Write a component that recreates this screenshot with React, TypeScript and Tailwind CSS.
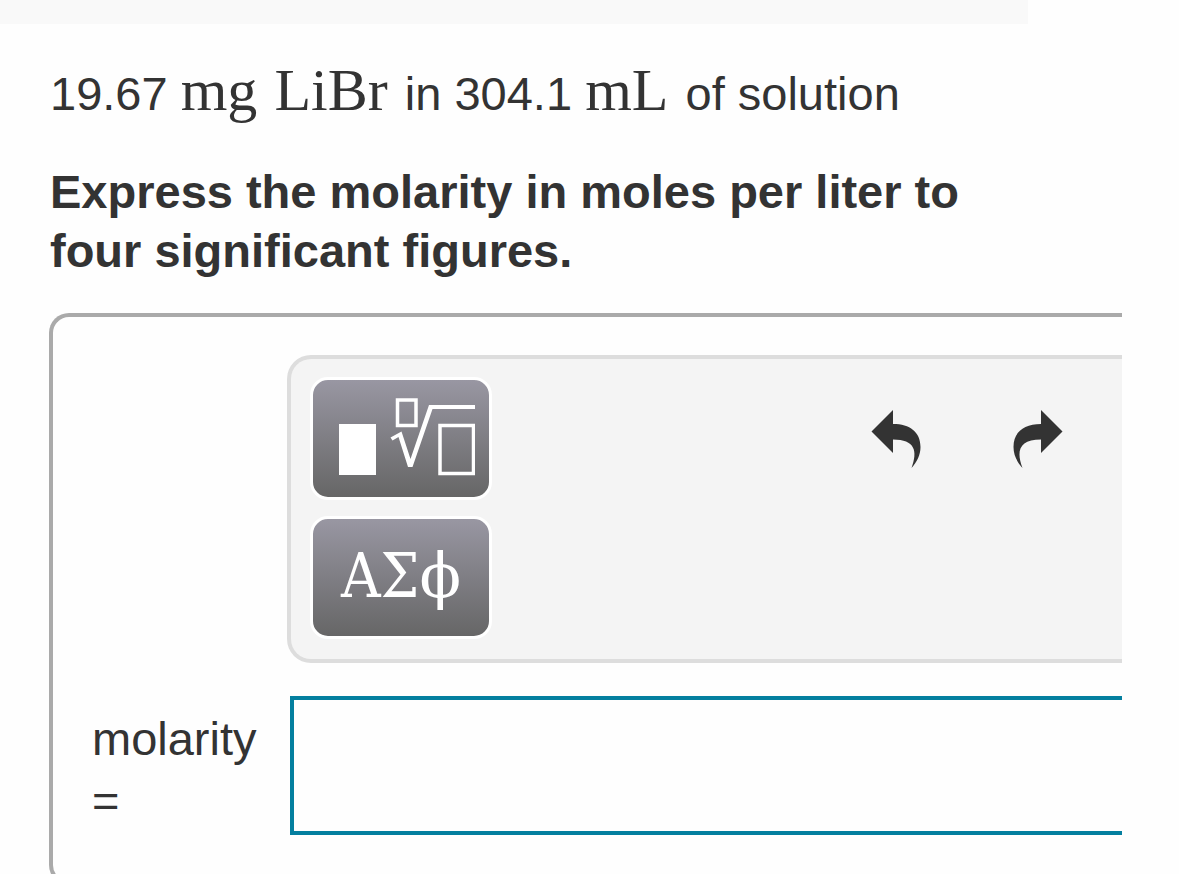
import type { ReactNode } from "react";

function Unit({ children }: { children: ReactNode }) {
  return <span className="mr-1 font-['Liberation_Serif',serif] text-[60px] leading-none">{children}</span>;
}

function ToolButton({ label, children }: { label: string; children: ReactNode }) {
  return (
    <button
      type="button"
      aria-label={label}
      className="flex h-[123px] w-[182px] items-center justify-center rounded-[18px] border-3 border-white bg-linear-to-b from-[#9a98a4] to-[#656565] bg-origin-border text-white"
    >
      {children}
    </button>
  );
}

function TemplateIcon() {
  return (
    <svg width="136" height="78" viewBox="0 0 136 78" fill="none" stroke="white" aria-hidden="true">
      <path d="M0 26H37V77H0Z" fill="white" stroke="none" />
      <path d="M58.5 2H77V27.5H58.5Z" strokeWidth="3.5" />
      <path
        d="M51.5 39.500L62.500 33.500L71.500 61L90 7H136V11H93.500L73.500 69H69L59.500 39L53.500 42.500Z"
        fill="white"
        stroke="none"
      />
      <path d="M101 27.500H134.500V75.500H101Z" strokeWidth="3.500" />
    </svg>
  );
}

function CurvedArrow({ flipped = false }: { flipped?: boolean }) {
  return (
    <svg
      width="50"
      height="58"
      viewBox="0 0 50 58"
      fill="#333333"
      className={flipped ? "-scale-x-100" : ""}
      aria-hidden="true"
    >
      <path d="M0.500 21.500L22 0V14C39 14 49.500 22 49.500 37C49.500 45 46 52 40.500 58C47 41 44 29.500 22 29.500V43Z" />
    </svg>
  );
}

export default function App() {
  return (
    <div className="h-screen overflow-hidden bg-[#fefefe] font-['Liberation_Sans',Arial,sans-serif] text-[47px] text-[#333333]">
      <div className="mr-[151px] h-6 bg-[#f9f9f9]" />
      <main className="pt-9 pl-[50px]">
        <p className="leading-[68px] whitespace-nowrap">
          19.67 <Unit>mg</Unit> <Unit>LiBr</Unit> in 304.1 <Unit>mL</Unit> of solution
        </p>
        <p className="mt-[34px] max-w-[960px] leading-[59px] font-bold">
          Express the molarity in moles per liter to four significant figures.
        </p>
        <section className="mt-[33px] mr-[57px] -ml-px rounded-l-[20px] border-4 border-r-0 border-[#aaaaaa] pt-[38px] pb-[46px] pl-[234px]">
          <div className="flex items-start justify-between rounded-l-[24px] border-4 border-r-0 border-[#dddddd] bg-[#f4f4f4] pt-[18px] pr-[59px] pb-5 pl-[19px]">
            <div className="flex flex-col gap-4">
              <ToolButton label="Math templates">
                <span className="pb-1 pl-3">
                  <TemplateIcon />
                </span>
              </ToolButton>
              <ToolButton label="Greek symbols">
                <span className="pb-1 font-['DejaVu_Serif_Condensed','DejaVu_Serif',serif] text-[61px] leading-none">
                  ΑΣ<span className="font-['DejaVu_Serif',serif]">ϕ</span>
                </span>
              </ToolButton>
            </div>
            <div className="flex gap-[92px] pt-[33px]">
              <button type="button" aria-label="Undo">
                <CurvedArrow />
              </button>
              <button type="button" aria-label="Redo">
                <CurvedArrow flipped />
              </button>
            </div>
          </div>
          <div className="mt-[33px] -ml-[195px] flex items-start">
            <label htmlFor="molarity" className="w-[198px] shrink-0 pt-3 leading-[62px]">
              molarity
              <br />=
            </label>
            <input
              id="molarity"
              type="text"
              className="h-[139px] min-w-0 flex-1 border-4 border-r-0 border-[#047f9f] bg-[#fefefe] px-4 outline-none"
            />
          </div>
        </section>
      </main>
    </div>
  );
}
